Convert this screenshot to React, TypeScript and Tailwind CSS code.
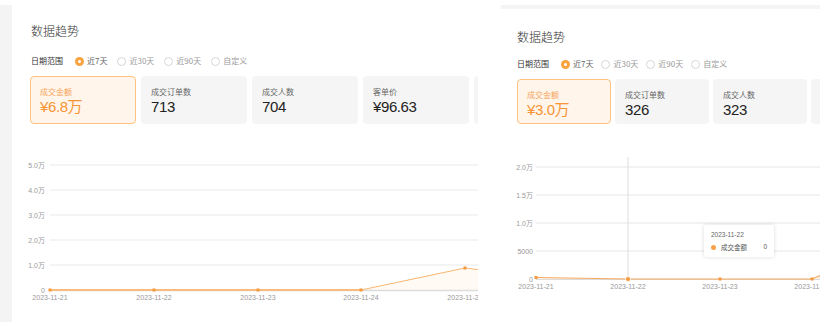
import React from 'react';

const cjk = { fontFamily: '"Noto Sans CJK SC", "Noto Sans", sans-serif' };
const num = { fontFamily: '"Liberation Sans", "Noto Sans CJK SC", sans-serif' };

interface Stat {
  label: string;
  value: string;
  active?: boolean;
}

const leftStats: Stat[] = [
  { label: '成交金额', value: '¥6.8万', active: true },
  { label: '成交订单数', value: '713' },
  { label: '成交人数', value: '704' },
  { label: '客单价', value: '¥96.63' },
  { label: '退款金额', value: '¥0' },
];

const rightStats: Stat[] = [
  { label: '成交金额', value: '¥3.0万', active: true },
  { label: '成交订单数', value: '326' },
  { label: '成交人数', value: '323' },
  { label: '客单价', value: '¥92.14' },
];

const ranges = ['近7天', '近30天', '近90天', '自定义'];

function Radio({ checked }: { checked?: boolean }) {
  if (checked) {
    return (
      <span className="flex h-[9px] w-[9px] items-center justify-center rounded-full bg-[#f8a33f]">
        <span className="h-[3px] w-[3px] rounded-full bg-white" />
      </span>
    );
  }
  return <span className="h-[9px] w-[9px] rounded-full border border-[#d6d6d6] bg-white" />;
}

function RangeRow({ itemGap }: { itemGap: string }) {
  return (
    <div className="flex h-[12px] items-center text-[8px] leading-[12px] text-[#333]" style={cjk}>
      <span className="mr-[10px] w-[34px] whitespace-nowrap">日期范围</span>
      <div className={`flex items-center ${itemGap}`}>
        {ranges.map((r, i) => (
          <label key={r} className="flex items-center gap-[3px] whitespace-nowrap">
            <Radio checked={i === 0} />
            <span className={i === 0 ? 'text-[#666]' : 'text-[#999]'}>{r}</span>
          </label>
        ))}
      </div>
    </div>
  );
}

function StatCard({ stat, width, height }: { stat: Stat; width: string; height: string }) {
  return (
    <div
      className={`${width} ${height} shrink-0 rounded-[4px] ${
        stat.active ? 'border border-[#ffc27f] bg-[#fff5ea] pl-[9px] pt-[10px]' : 'bg-[#f5f5f5] pl-[10px] pt-[11px]'
      }`}
    >
      <div
        className={`text-[8px] leading-[10px] whitespace-nowrap ${stat.active ? 'text-[#f6a560]' : 'text-[#666]'}`}
        style={cjk}
      >
        {stat.label}
      </div>
      <div
        className={`mt-[1px] text-[15px] leading-[18px] tracking-[-0.4px] whitespace-nowrap ${
          stat.active ? 'text-[#f79436]' : 'text-[#222]'
        }`}
        style={num}
      >
        {stat.value}
      </div>
    </div>
  );
}

const axisText = { fontFamily: '"Liberation Sans", "Noto Sans CJK SC", sans-serif', fontSize: 7, fill: '#999' };

function LeftChart() {
  const grid = [
    { y: 165, t: '5.0万' },
    { y: 190, t: '4.0万' },
    { y: 215, t: '3.0万' },
    { y: 240, t: '2.0万' },
    { y: 265, t: '1.0万' },
  ];
  const xs = [50, 154, 258, 361, 465];
  const dates = ['2023-11-21', '2023-11-22', '2023-11-23', '2023-11-24', '2023-11-25'];
  const pts: [number, number][] = [
    [50, 290],
    [154, 290],
    [258, 290],
    [361, 290],
    [465, 268],
    [569, 281],
  ];
  const line = pts.map((p) => p.join(',')).join(' ');
  return (
    <svg width={466} height={202} viewBox="12 124 466 202" className="block">
      {grid.map((g) => (
        <g key={g.y}>
          <line x1={50} x2={478} y1={g.y} y2={g.y} stroke="#e9e9e9" strokeWidth={1} />
          <text x={45} y={g.y + 2.5} textAnchor="end" style={axisText}>
            {g.t}
          </text>
        </g>
      ))}
      <line x1={50} x2={478} y1={290.5} y2={290.5} stroke="#dcdcdc" strokeWidth={1.5} />
      <text x={45} y={292.5} textAnchor="end" style={axisText}>
        0
      </text>
      {xs.map((x, i) => (
        <text key={x} x={x} y={299.5} textAnchor="middle" style={axisText}>
          {dates[i]}
        </text>
      ))}
      <polygon points={`50,290 ${line} 569,290`} fill="#fbd2a6" fillOpacity={0.12} />
      <line x1={50} x2={361} y1={290} y2={290} stroke="#f7cb9e" strokeWidth={2} />
      <polyline points={line} fill="none" stroke="#f8a44e" strokeWidth={0.8} />
      {pts.slice(0, 5).map(([x, y]) => (
        <rect key={x} x={x - 1.5} y={y - 1.5} width={3} height={3} fill="#f7973c" />
      ))}
    </svg>
  );
}

function RightChart() {
  const grid = [
    { y: 167, t: '2.0万' },
    { y: 195, t: '1.5万' },
    { y: 223, t: '1.0万' },
    { y: 251, t: '5000' },
  ];
  const xs = [536, 628, 720, 812];
  const dates = ['2023-11-21', '2023-11-22', '2023-11-23', '2023-11-24'];
  const pts: [number, number][] = [
    [536, 277.5],
    [628, 279],
    [720, 279],
    [812, 279],
    [904, 241],
  ];
  const line = pts.map((p) => p.join(',')).join(' ');
  return (
    <div className="relative">
      <svg width={319} height={202} viewBox="501 124 319 202" className="block">
        {grid.map((g) => (
          <g key={g.y}>
            <line x1={536} x2={820} y1={g.y} y2={g.y} stroke="#e6e6e6" strokeWidth={1} />
            <text x={533} y={g.y + 2.5} textAnchor="end" style={axisText}>
              {g.t}
            </text>
          </g>
        ))}
        <line x1={628} x2={628} y1={157} y2={279} stroke="#dedede" strokeWidth={1} />
        <line x1={536} x2={820} y1={279.5} y2={279.5} stroke="#dcdcdc" strokeWidth={1.2} />
        <text x={533} y={281.5} textAnchor="end" style={axisText}>
          0
        </text>
        {xs.map((x, i) => (
          <text key={x} x={x} y={288.5} textAnchor="middle" style={axisText}>
            {dates[i]}
          </text>
        ))}
        <polygon points={`536,279 ${line} 904,279`} fill="#fbd2a6" fillOpacity={0.25} />
        <polyline points={line} fill="none" stroke="#f5a85c" strokeWidth={1.2} />
        {pts.slice(0, 4).map(([x, y]) => (
          <rect key={x} x={x - 1.5} y={y - 1.5} width={3} height={3} fill="#f7973c" />
        ))}
        <circle cx={628} cy={279} r={2.5} fill="#f7973c" stroke="#fff" strokeWidth={0.8} />
      </svg>
      <div
        className="absolute left-[203px] top-[101px] h-[32px] w-[70px] rounded-[2px] bg-white px-[7px] pt-[5px] shadow-[0_0_4px_rgba(0,0,0,0.14)]"
        style={num}
      >
        <div className="text-[6.5px] leading-[10px] text-[#666]">2023-11-22</div>
        <div className="mt-[2px] flex items-center text-[6.5px] leading-[10px] text-[#555]">
          <span className="mr-[5px] h-[5px] w-[5px] rounded-full bg-[#f7a24a]" />
          <span style={cjk}>成交金额</span>
          <span className="ml-auto">0</span>
        </div>
      </div>
    </div>
  );
}

export default function App() {
  return (
    <div className="flex h-[326px] w-[838px] overflow-hidden bg-white">
      {/* left shot */}
      <div className="flex h-full w-[478px] shrink-0">
        <div className="mt-[5px] mb-[4px] w-[12px] shrink-0 bg-[#f4f4f4]" />
        <div className="min-w-0 flex-1 overflow-hidden">
          <div className="pl-[19px] pt-[23px] text-[12px] font-light leading-[16px] text-[#333]" style={cjk}>
            数据趋势
          </div>
          <div className="mt-[16px] pl-[19px]">
            <RangeRow itemGap="gap-[10px]" />
          </div>
          <div className="mt-[9px] flex gap-[5px] pl-[18px]">
            {leftStats.map((s) => (
              <StatCard key={s.label} stat={s} width="w-[106px]" height="h-[48px]" />
            ))}
          </div>
          <LeftChart />
        </div>
      </div>

      {/* right shot */}
      <div className="ml-[23px] flex h-full w-[319px] shrink-0 flex-col overflow-hidden">
        <div className="mt-[5px] h-[4px] shrink-0 bg-[#f4f4f4]" />
        <div className="pl-[16px] pt-[20px] text-[12px] font-light leading-[16px] text-[#333]" style={cjk}>
          数据趋势
        </div>
        <div className="mt-[13px] pl-[16px]">
          <RangeRow itemGap="gap-[8px]" />
        </div>
        <div className="mt-[9px] flex gap-[4px] pl-[16px]">
          {rightStats.map((s) => (
            <StatCard key={s.label} stat={s} width="w-[94px]" height="h-[45px]" />
          ))}
        </div>
        <RightChart />
      </div>
    </div>
  );
}
